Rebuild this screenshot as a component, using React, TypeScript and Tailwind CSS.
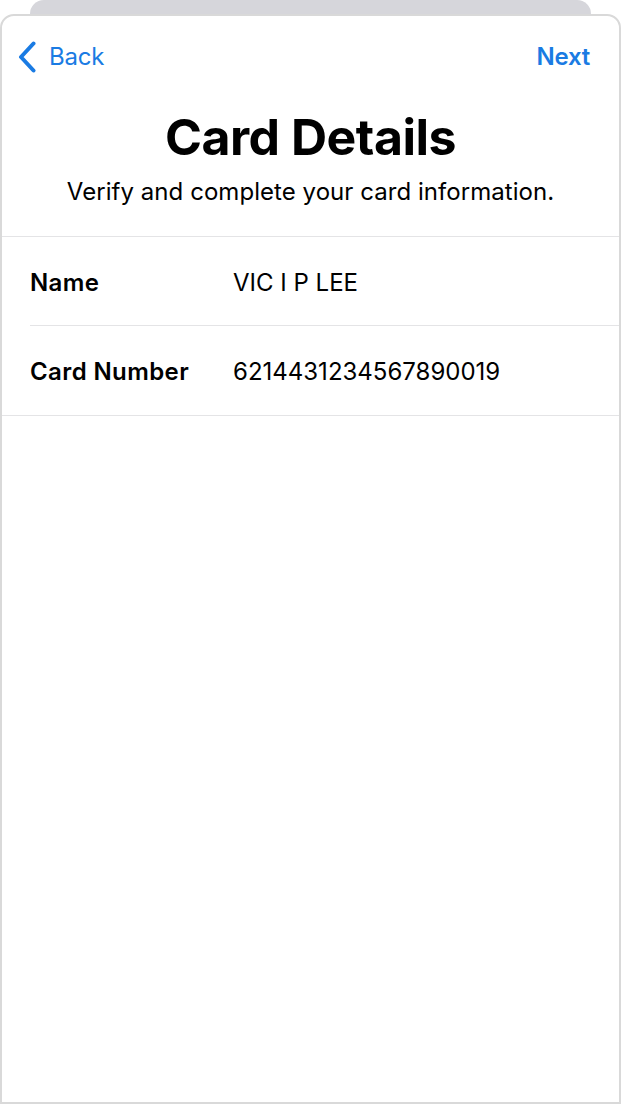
const FONT = { fontFamily: 'Inter, "Liberation Sans", sans-serif' }

function Row({ label, value, last }: { label: string; value: string; last?: boolean }) {
  return (
    <div className="pl-[28px]">
      <div
        className={`flex h-[89px] items-center pt-[3px] ${last ? '' : 'border-b border-[#e4e4e6]'}`}
      >
        <span className="w-[203px] shrink-0 text-[24px] font-semibold tracking-[0.4px] text-black">
          {label}
        </span>
        <span className="text-[24px] font-normal text-black">{value}</span>
      </div>
    </div>
  )
}

export default function App() {
  return (
    <div className="relative h-[1104px] w-[621px] overflow-hidden bg-white" style={FONT}>
      {/* sheet behind */}
      <div className="mx-[30px] h-[28px] rounded-t-[14px] bg-[#d6d6db]" />

      {/* card sheet */}
      <div className="-mt-[14px] h-[1090px] rounded-t-[14px] border-2 border-[#d9d9d9] bg-white">
        {/* nav */}
        <div className="flex h-[80px] items-center justify-between pl-[16px] pr-[29px] pt-[2px]">
          <button className="flex items-center gap-[13px] text-[#1a7be3]">
            <svg width="18" height="32" viewBox="0 0 18 32" fill="none">
              <path
                d="M15.5 2.5 L3 16 L15.5 29.5"
                stroke="currentColor"
                strokeWidth="4"
                strokeLinecap="round"
                strokeLinejoin="round"
              />
            </svg>
            <span className="text-[24px] font-normal tracking-[-0.2px]">Back</span>
          </button>
          <button className="text-[24px] font-semibold tracking-[-0.2px] text-[#1a7be3]">Next</button>
        </div>

        {/* header */}
        <div className="flex flex-col items-center pb-[28px] pt-[12px]">
          <h1 className="text-[50px] leading-[58px] font-bold tracking-[-0.5px] text-black">Card Details</h1>
          <p className="mt-[10px] text-[24px] leading-[32px] tracking-[0.05px] text-black">
            Verify and complete your card information.
          </p>
        </div>

        {/* rows */}
        <div className="border-y border-[#e4e4e6]">
          <Row label="Name" value="VIC I P LEE" />
          <Row label="Card Number" value="6214431234567890019" last />
        </div>
      </div>
    </div>
  )
}
